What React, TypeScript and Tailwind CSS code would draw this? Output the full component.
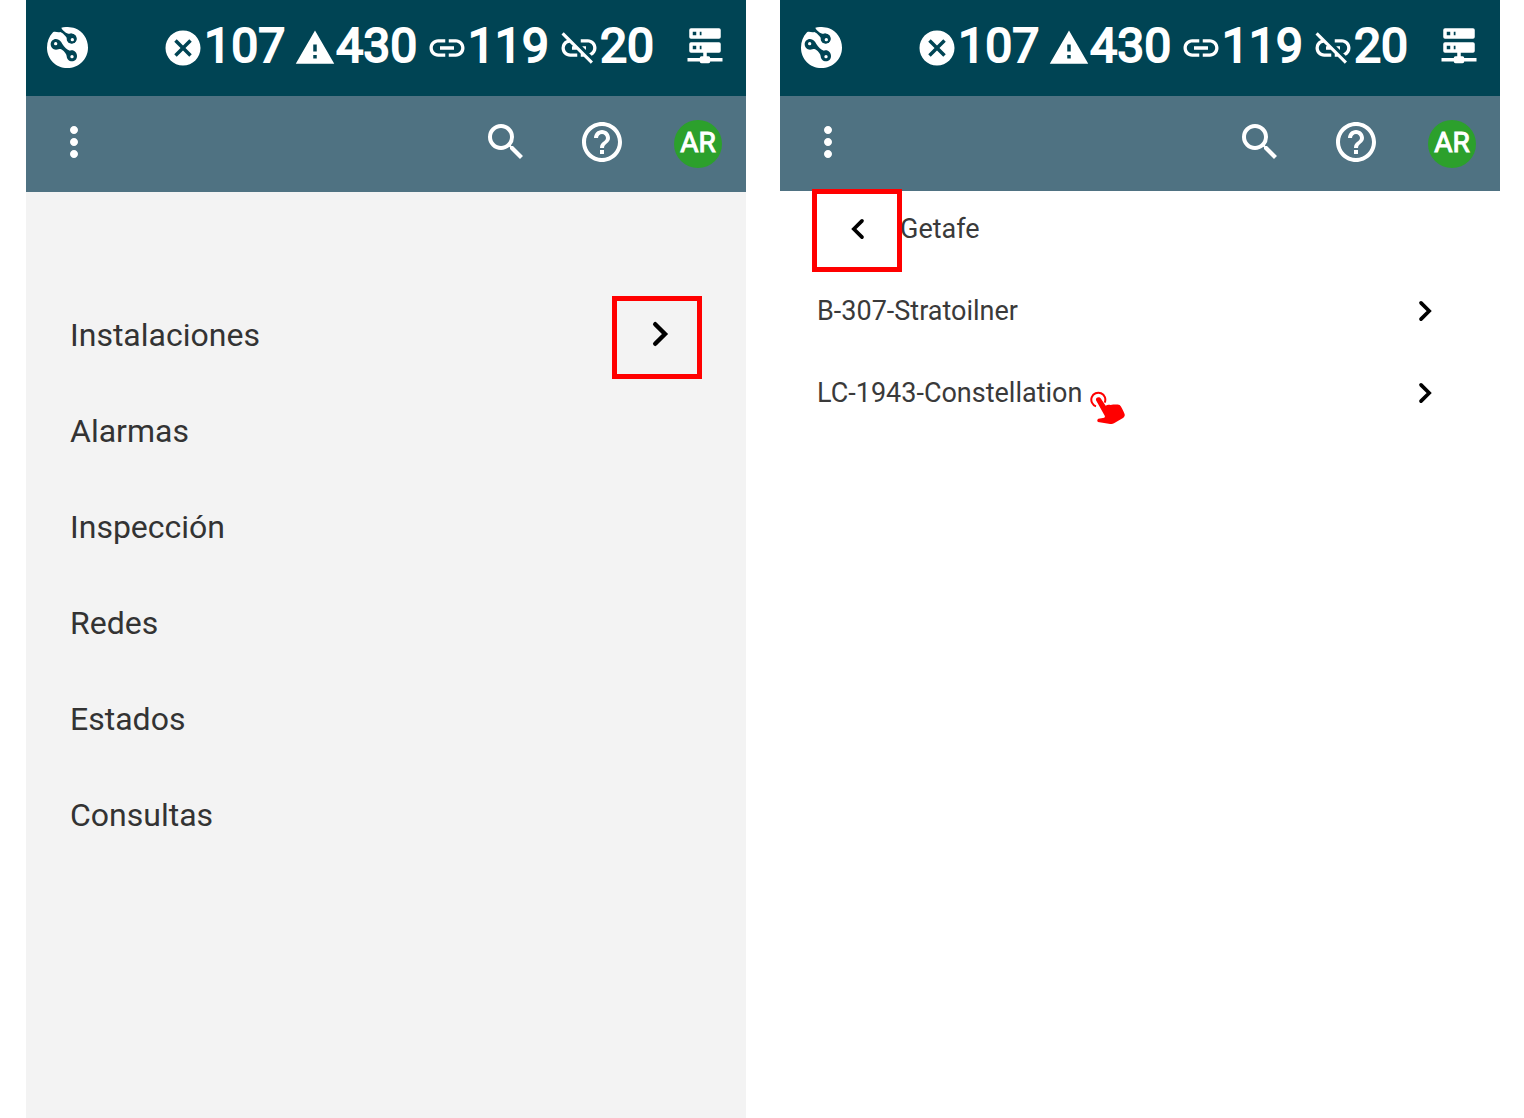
import React from 'react';
import { MdCancel, MdHelpOutline, MdLink, MdLinkOff, MdMoreVert, MdSearch, MdWarning } from 'react-icons/md';

const counters = [
  { label: 'Alarmas', value: 107, Icon: MdCancel },
  { label: 'Avisos', value: 430, Icon: MdWarning },
  { label: 'Conectados', value: 119, Icon: MdLink },
  { label: 'Desconectados', value: 20, Icon: MdLinkOff },
];

const menu = ['Instalaciones', 'Alarmas', 'Inspección', 'Redes', 'Estados', 'Consultas'];

const sites = ['B-307-Stratoilner', 'LC-1943-Constellation'];

function Logo() {
  return (
    <svg viewBox="0 0 123 123" className="size-[41px]" aria-hidden="true">
      <path
        d="M43 2 C52 -1 72 -1 84 4 C107 13 123 35 123 62 C123 96 95 123 61 123 C27 123 0 96 0 62 C0 44 6 28 18 16 C25 12 32 18 40 15 C46 17 50 22 55 27 C58 31 62 34 63 40 C65 52 85 52 88 38 C90 26 78 18 68 20 C62 20 58 18 53 14 C48 10 44 6 43 2 Z"
        fill="#fff"
      />
      <g fill="#004454">
        <circle cx="74" cy="35" r="15" />
        <path d="M27 36 C36 36 42 43 46 51 C52 60 60 69 69 71 C80 67 90 76 90 87 C90 97 83 103 75 103 C66 103 59 96 59 87 C58 80 52 73 45 68 C40 64 35 68 27 68 C18 68 11 61 11 52 C11 43 18 36 27 36 Z" />
      </g>
      <g fill="#fff">
        <circle cx="76" cy="38" r="5" />
        <circle cx="26" cy="50" r="5" />
        <circle cx="75" cy="89" r="5" />
      </g>
    </svg>
  );
}

function ServerIcon() {
  return (
    <svg viewBox="0 0 24 24" className="size-[42px]" fill="currentColor" aria-hidden="true">
      <path d="M13 19h1a1 1 0 0 1 1 1h7v2h-7a1 1 0 0 1-1 1h-4a1 1 0 0 1-1-1H2v-2h7a1 1 0 0 1 1-1h1v-2H4a1 1 0 0 1-1-1v-4a1 1 0 0 1 1-1h16a1 1 0 0 1 1 1v4a1 1 0 0 1-1 1h-7v2M4 3h16a1 1 0 0 1 1 1v4a1 1 0 0 1-1 1H4a1 1 0 0 1-1-1V4a1 1 0 0 1 1-1m5 4h1V5H9v2m0 8h1v-2H9v2M5 5v2h2V5H5m0 8v2h2v-2H5z" />
    </svg>
  );
}

function Chevron({ back, large }: { back?: boolean; large?: boolean }) {
  return (
    <svg
      viewBox="0 0 24 24"
      className={large ? 'size-12' : 'size-10'}
      fill="none"
      stroke="#000"
      strokeWidth="2.2"
      strokeLinecap="round"
      aria-hidden="true"
    >
      <path d={back ? 'M14.4 7.1 9.5 12l4.9 4.9' : 'M9.6 7.1 14.5 12l-4.9 4.9'} />
    </svg>
  );
}

function TapHand() {
  return (
    <svg viewBox="0 0 108 102" className="h-[34px] w-9" aria-hidden="true">
      <path d="M18 46 A21 21 0 1 1 44 35" fill="none" stroke="#f00" strokeWidth="6" />
      <path
        d="M18 28 C16 19 28 15 33 23 L47 44 C53 40 58 42 62 42 C72 40 82 40 89 42 C94 46 99 58 104 70 C105 75 103 78 99 81 L72 97 C67 100 62 99 56 98 L24 93 C21 90 21 85 25 83 L43 80 L45 76 Z"
        fill="#f00"
      />
    </svg>
  );
}

// Red frame over the control the reader has to press
function Highlight() {
  return <span className="absolute -inset-x-1 -inset-y-0.5 border-5 border-[#ff0000]" />;
}

function StatusBar() {
  return (
    <header className="flex h-24 items-center bg-[#004454] pl-[21px] pr-5 text-white">
      <div className="pb-0.5">
        <Logo />
      </div>
      <ul className="ml-auto flex gap-[9px]">
        {counters.map(({ label, value, Icon }) => (
          <li key={label} className="flex items-center">
            <Icon className="size-[42px]" aria-hidden="true" />
            <span className="pb-1 text-5xl [-webkit-text-stroke:2px_white]">{value}</span>
          </li>
        ))}
      </ul>
      <button type="button" aria-label="Servidor" className="ml-[30px] pb-2">
        <ServerIcon />
      </button>
    </header>
  );
}

function Toolbar({ className }: { className: string }) {
  return (
    <div className={`flex items-center bg-[#4f7282] px-6 text-white ${className}`}>
      <button type="button" aria-label="Menú" className="pb-1">
        <MdMoreVert className="size-12" />
      </button>
      <div className="ml-auto flex items-center gap-12">
        <button type="button" aria-label="Buscar" className="pb-1">
          <MdSearch className="size-12" />
        </button>
        <button type="button" aria-label="Ayuda" className="pb-1">
          <MdHelpOutline className="size-12" />
        </button>
        <button
          type="button"
          className="flex size-12 items-center justify-center rounded-full bg-[#2ca02c] pb-0.5 text-[28px] [-webkit-text-stroke:1px_white]"
        >
          AR
        </button>
      </div>
    </div>
  );
}

function MainMenu() {
  return (
    <section className="flex flex-1 flex-col bg-[#f3f3f3]">
      <StatusBar />
      <Toolbar className="h-24" />
      <nav className="pt-24">
        <ul>
          {menu.map((item, i) => (
            <li key={item} className="flex h-24 items-center justify-between pb-0.5 pl-11 pr-12">
              <a href="#" className="text-[32px] text-[#333]">
                {item}
              </a>
              {i === 0 && (
                <button
                  type="button"
                  aria-label={item}
                  className="relative mt-1 flex h-[79px] w-[82px] items-center justify-center pb-1.5 pl-1.5"
                >
                  <Chevron large />
                  <Highlight />
                </button>
              )}
            </li>
          ))}
        </ul>
      </nav>
    </section>
  );
}

function SiteList() {
  return (
    <section className="flex flex-1 flex-col bg-white">
      <StatusBar />
      <Toolbar className="h-[95px]" />
      <div className="flex items-center pl-9 text-[27px] text-[#3a3a3a]">
        <button
          type="button"
          aria-label="Volver"
          className="relative flex h-[79px] w-[82px] items-center justify-center pb-1 pl-0.5"
        >
          <Chevron back />
          <Highlight />
        </button>
        <h2 className="pb-0.5 pl-0.5">Getafe</h2>
      </div>
      <ul>
        {sites.map((site, i) => (
          <li
            key={site}
            className="flex h-[82px] items-center justify-between pl-[37px] pr-[55px] text-[27px] text-[#3a3a3a]"
          >
            <a href="#" className="relative">
              {site}
              {i === 1 && (
                <span className="absolute left-full top-[18px] ml-2">
                  <TapHand />
                </span>
              )}
            </a>
            <button type="button" aria-label={site}>
              <Chevron />
            </button>
          </li>
        ))}
      </ul>
    </section>
  );
}

export default function App() {
  return (
    <main className="flex min-h-screen gap-[34px] bg-white pl-[26px] pr-6 font-[Roboto,sans-serif]">
      <MainMenu />
      <SiteList />
    </main>
  );
}
